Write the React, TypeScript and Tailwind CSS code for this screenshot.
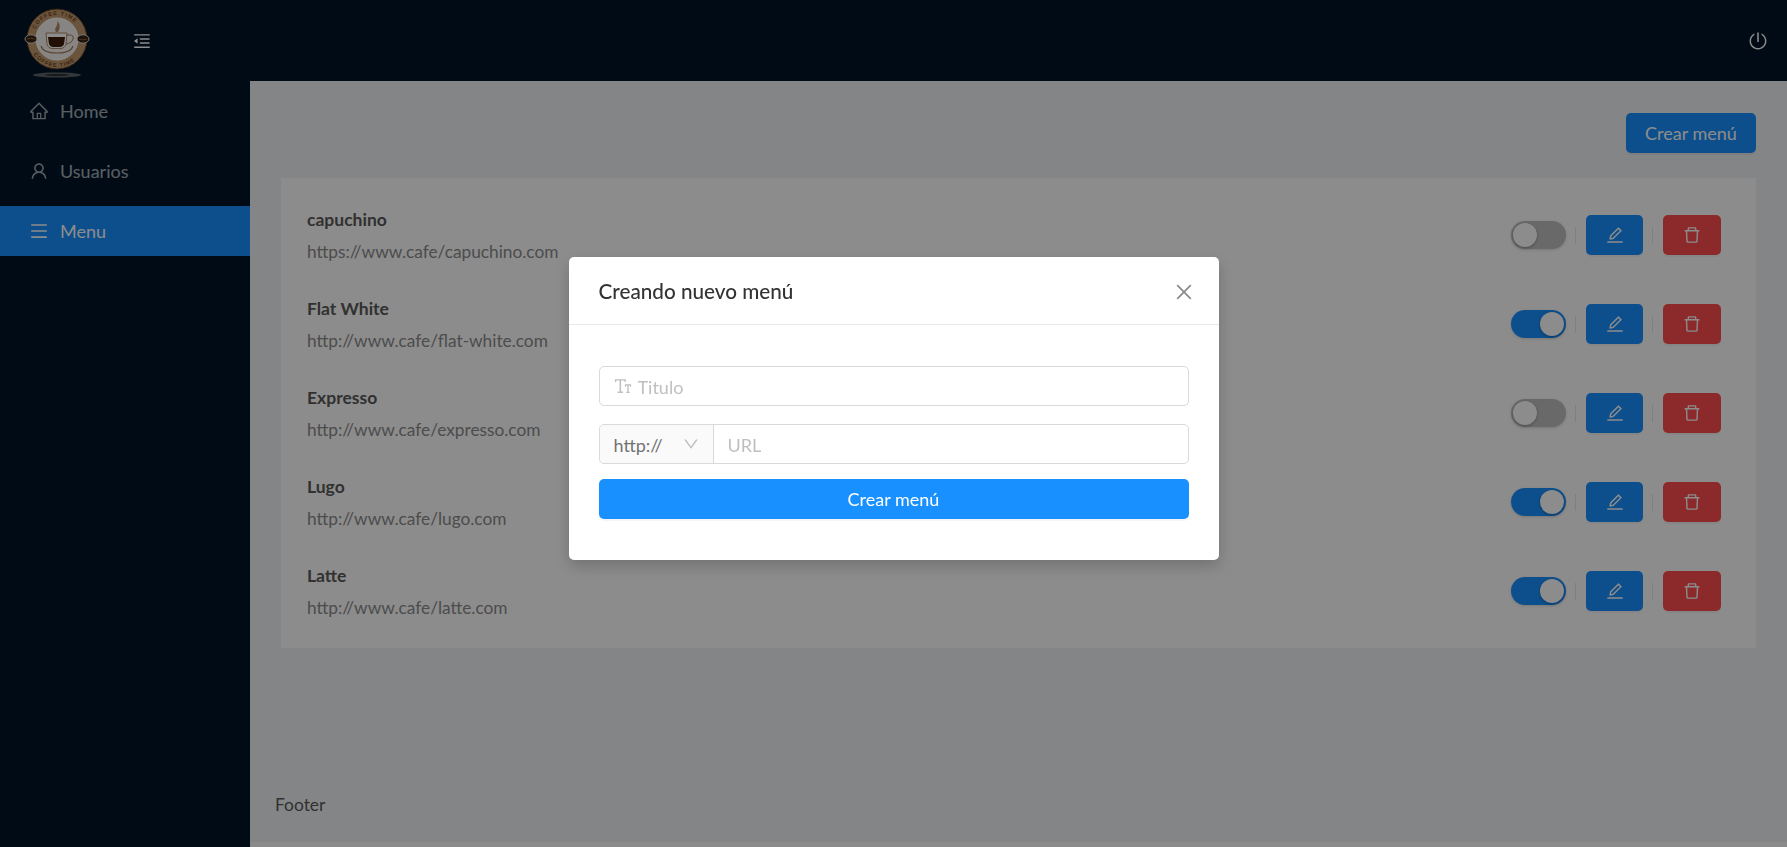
import {
  AiOutlineClose,
  AiOutlineDelete,
  AiOutlineDown,
  AiOutlineEdit,
  AiOutlineFontSize,
  AiOutlineHome,
  AiOutlineMenu,
  AiOutlineMenuFold,
  AiOutlinePoweroff,
  AiOutlineUser,
} from "react-icons/ai"

const navItems = [
  { label: "Home", icon: AiOutlineHome },
  { label: "Usuarios", icon: AiOutlineUser },
  { label: "Menu", icon: AiOutlineMenu, active: true },
]

const menus = [
  { title: "capuchino", url: "https://www.cafe/capuchino.com", on: false },
  { title: "Flat White", url: "http://www.cafe/flat-white.com", on: true },
  { title: "Expresso", url: "http://www.cafe/expresso.com", on: false },
  { title: "Lugo", url: "http://www.cafe/lugo.com", on: true },
  { title: "Latte", url: "http://www.cafe/latte.com", on: true },
]

function Logo() {
  return (
    <svg width="66" height="72" viewBox="0 0 66 72" className="block">
      <defs>
        <path id="ring-top" d="M9 32 A24 24 0 0 1 57 32" />
        <path id="ring-bottom" d="M5 32 A28 28 0 0 0 61 32" />
      </defs>
      <circle cx="33" cy="32" r="30" fill="#c39a6e" stroke="#5b3a1e" strokeWidth="1" />
      <circle cx="33" cy="32" r="21" fill="#f6f3ef" stroke="#fff" strokeWidth="1" />
      <text fontSize="5.5" fontWeight="700" fill="#6b4423" letterSpacing="1" fontFamily="Liberation Sans, sans-serif">
        <textPath href="#ring-top" startOffset="10">COFFEE TIME</textPath>
      </text>
      <text fontSize="5.5" fontWeight="700" fill="#6b4423" letterSpacing="1" fontFamily="Liberation Sans, sans-serif">
        <textPath href="#ring-bottom" startOffset="16">COFFEE TIME</textPath>
      </text>
      <ellipse cx="7" cy="32" rx="6" ry="4.2" fill="#3a2412" stroke="#f1eeea" strokeWidth="0.9" />
      <ellipse cx="59" cy="32" rx="6" ry="4.2" fill="#3a2412" stroke="#f1eeea" strokeWidth="0.9" />
      <path d="M3 32 q4 -1.6 8 0 M55 32 q4 1.6 8 0" stroke="#a0764c" strokeWidth="0.7" fill="none" />
      <path d="M32 25 c-3 -4 3 -6 1 -11 c4 3 3 8 1 11z" fill="#b08a62" />
      <path d="M22 26 h21 l-1 11 q-1 4.5 -6 4.5 h-7 q-5 0 -6 -4.5z" fill="#fff" stroke="#a57a50" strokeWidth="0.9" />
      <path d="M24 30 h17 l-1 7 q-1 3 -4.5 3 h-6 q-3.500 0 -4.500 -3z" fill="#3c1a08" />
      <path d="M43 28 h3 q4 0 3 4 q-1 4 -7 5" fill="none" stroke="#a57a50" strokeWidth="1" />
      <path d="M17 39 q2 7 16 7 q14 0 16 -7" fill="none" stroke="#a57a50" strokeWidth="1.1" />
      <ellipse cx="33" cy="68" rx="24" ry="2.6" fill="#5f6469" />
      <ellipse cx="33" cy="68" rx="12" ry="1" fill="#2a2d30" />
    </svg>
  )
}

function Toggle({ on }: { on: boolean }) {
  return (
    <div
      className={`flex h-7 w-[55px] items-center rounded-full px-[2px] shadow-[0_1px_3px_rgba(0,0,0,0.15)] ${
        on ? "justify-end bg-[#1890ff]" : "justify-start bg-[#c0c0c0]"
      }`}
    >
      <div className="h-6 w-6 rounded-full bg-white shadow-[0_1px_3px_rgba(0,0,0,0.3)]" />
    </div>
  )
}

function MenuRow({ title, url, on }: { title: string; url: string; on: boolean }) {
  return (
    <div className="flex h-10 items-center">
      <div className="flex flex-col pt-[2px]">
        <span className="text-[17.5px] leading-[32px] font-bold text-[#595959]">{title}</span>
        <span className="text-[17.3px] leading-[32px] text-[#8c8c8c]">{url}</span>
      </div>
      <div className="ml-auto flex items-center">
        <Toggle on={on} />
        <div className="mr-[10px] ml-[9px] h-[17px] w-px bg-[#e8e8e8]" />
        <button className="flex h-10 w-[57px] items-center justify-center rounded-[5px] bg-[#1890ff] text-white shadow-[0_2px_0_rgba(0,0,0,0.04)]">
          <AiOutlineEdit size={20} />
        </button>
        <div className="mr-[10px] ml-[9px] h-[17px] w-px bg-[#e8e8e8]" />
        <button className="flex h-10 w-[58px] items-center justify-center rounded-[5px] bg-[#ff4d4f] text-white shadow-[0_2px_0_rgba(0,0,0,0.04)]">
          <AiOutlineDelete size={20} />
        </button>
      </div>
    </div>
  )
}

export default function App() {
  return (
    <div className="flex h-screen flex-col overflow-hidden bg-[#fbfbfb] font-['Lato',sans-serif] text-[17px] text-[#595959]">
      {/* Header */}
      <header className="flex h-[81px] shrink-0 items-center bg-[#001529] text-white">
        <div className="mt-[5px] ml-6">
          <Logo />
        </div>
        <AiOutlineMenuFold size={20} className="ml-[42px]" />
        <AiOutlinePoweroff size={20} className="mr-[19px] ml-auto" />
      </header>

      <div className="flex min-h-0 flex-1">
        {/* Sidebar */}
        <aside className="flex w-[250px] shrink-0 flex-col gap-[10px] bg-[#001529] pt-[5px]">
          {navItems.map((item) => {
            const Icon = item.icon
            return (
              <div
                key={item.label}
                className={`flex h-[50px] items-center gap-[11px] pl-[29px] text-[18px] ${
                  item.active ? "bg-[#1890ff] text-white" : "text-white/65"
                }`}
              >
                <Icon size={20} />
                <span>{item.label}</span>
              </div>
            )
          })}
        </aside>

        {/* Main */}
        <div className="flex min-w-0 flex-1 flex-col">
          <main className="flex flex-1 flex-col bg-[#f0f2f5] px-[31px] pt-8">
            <div className="flex justify-end">
              <button className="h-10 w-[130px] rounded-[5px] bg-[#1890ff] text-[18px] text-white shadow-[0_2px_0_rgba(0,0,0,0.05)]">
                Crear menú
              </button>
            </div>
            <div className="mt-[25px] flex flex-col gap-[49px] bg-white py-[37px] pr-[35px] pl-[26px]">
              {menus.map((m) => (
                <MenuRow key={m.title} {...m} />
              ))}
            </div>
          </main>
          <footer className="flex h-[74px] shrink-0 items-center bg-[#f0f2f5] pl-[25px] text-[17.4px] text-[#595959]">
            Footer
          </footer>
          <div className="h-[5px] shrink-0 bg-[#fbfbfb]" />
        </div>
      </div>

      {/* Overlay */}
      <div className="fixed inset-0 bg-black/45" />

      {/* Modal */}
      <div className="fixed inset-0 flex justify-center pt-[257px]">
        <div className="h-[303px] w-[650px] rounded-[5px] bg-white shadow-[0_6px_16px_rgba(0,0,0,0.2)]">
          <div className="flex h-[68px] items-center justify-between border-b border-[#e8e8e8] pt-[2px] pr-[24px] pl-[30px]">
            <span className="text-[20.7px] font-medium text-[#333333]">Creando nuevo menú</span>
            <AiOutlineClose size={22} className="text-[#8c8c8c]" />
          </div>
          <div className="flex flex-col px-[30px] pt-[41px]">
            <div className="flex h-10 items-center rounded-[5px] border border-[#d9d9d9] px-[13px]">
              <AiOutlineFontSize size={20} className="shrink-0 text-[#bfbfbf]" />
              <input placeholder="Titulo" className="ml-[5px] w-full pt-[2px] text-[18px] outline-none placeholder:text-[#bfbfbf]" />
            </div>
            <div className="mt-[18px] flex h-10 rounded-[5px] border border-[#d9d9d9]">
              <div className="flex w-[114px] shrink-0 items-center justify-between rounded-l-[5px] border-r border-[#d9d9d9] bg-[#fafafa] pr-[13px] pl-[14px] text-[18px] text-[#737373]">
                <span className="pt-[2px]">http://</span>
                <AiOutlineDown size={18} className="text-[#bfbfbf]" />
              </div>
              <input placeholder="URL" className="w-full px-[14px] pt-[2px] text-[18px] outline-none placeholder:text-[#bfbfbf]" />
            </div>
            <button className="mt-[15px] h-10 rounded-[5px] bg-[#1890ff] text-[18px] text-white shadow-[0_2px_0_rgba(0,0,0,0.04)]">
              Crear menú
            </button>
          </div>
        </div>
      </div>
    </div>
  )
}
